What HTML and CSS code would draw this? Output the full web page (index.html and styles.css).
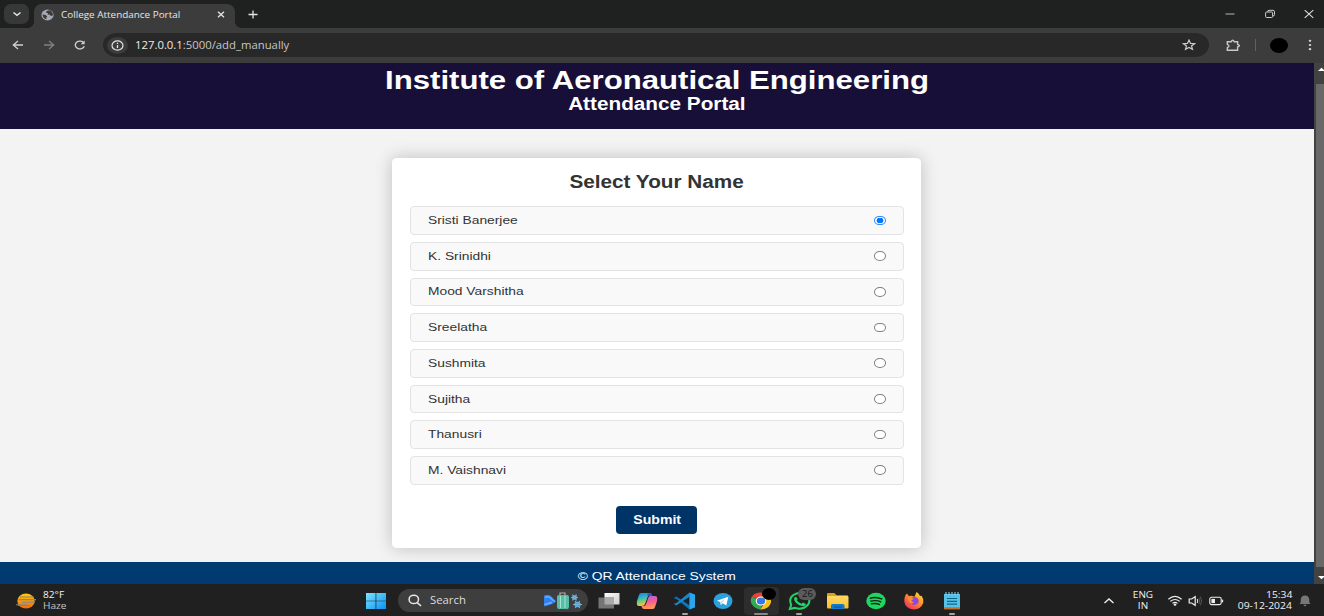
FILE: index.html
```html
<!DOCTYPE html>
<html lang="en">
<head>
<meta charset="utf-8">
<title>College Attendance Portal</title>
<link rel="stylesheet" href="styles.css">
</head>
<body>
<div class="screen">
  <div class="tabstrip">
    <div class="tab-search"><svg width="10" height="8" viewBox="0 0 10 8"><path d="M1.5 2.5 5 5.3 8.5 2.5" fill="none" stroke="#e3e3e3" stroke-width="1.6"/></svg></div>
    <div class="tab">
      <svg class="globe" width="13" height="12" viewBox="0 0 13 12"><ellipse cx="6.5" cy="6" rx="6.1" ry="5.4" fill="#a5a9b1"/><path d="M7 1.6Q5 2 5 3.4L7 4.2 6.5 5.5 9 5.7 10 7.2 12 6.2Q12 2.5 8.5 1.2ZM1.4 5.6 4.6 6 6.3 7.5 5.3 8.4 5.4 10.3Q2 9.6 1.4 5.6Z" fill="#3c3c3c"/></svg>
      <span class="tab-title">College Attendance Portal</span>
      <svg class="tab-close" width="8" height="7" viewBox="0 0 8 7"><path d="M1 .8 7 6.2M7 .8 1 6.2" stroke="#e3e3e3" stroke-width="1.4"/></svg>
    </div>
    <svg class="new-tab" width="10" height="9" viewBox="0 0 10 9"><path d="M.5 4.5H9.5M5 .5V8.5" stroke="#e3e3e3" stroke-width="1.3"/></svg>
    <div class="window-buttons">
      <svg width="10" height="10" viewBox="0 0 10 10"><path d="M.5 5H9.5" stroke="#aaa" stroke-width="1.1"/></svg>
      <svg width="10" height="10" viewBox="0 0 10 10"><rect x=".6" y="3" width="7" height="5.5" rx="1" fill="none" stroke="#ccc"/><path d="M2.5 2.8Q2.5 1.3 4 1.3H8Q9.5 1.3 9.5 2.8V5.5Q9.5 7 8 7" fill="none" stroke="#ccc"/></svg>
      <svg width="10" height="10" viewBox="0 0 10 10"><path d="M.7 1.2 9.3 8.8M9.3 1.2.7 8.8" stroke="#ddd" stroke-width="1.1"/></svg>
    </div>
  </div>
  <div class="toolbar">
    <svg class="nav" width="12" height="10" viewBox="0 0 12 10"><path d="M11 5H1.5M6 1 1.3 5 6 9" fill="none" stroke="#d0d0d0" stroke-width="1.3"/></svg>
    <svg class="nav" width="12" height="10" viewBox="0 0 12 10"><path d="M1 5H10.5M6 1 10.7 5 6 9" fill="none" stroke="#808080" stroke-width="1.3"/></svg>
    <svg class="nav" width="12" height="10" viewBox="0 0 12 10"><path d="M9.8 2.9A4.6 3.9 0 1 0 10.3 6.2" fill="none" stroke="#d0d0d0" stroke-width="1.4"/><path d="M10.6.4V4.2H6.7Z" fill="#d0d0d0"/></svg>
    <div class="omnibox">
      <div class="info"><svg width="13" height="11" viewBox="0 0 13 11"><ellipse cx="6.5" cy="5.5" rx="5.5" ry="4.6" fill="none" stroke="#e3e3e3" stroke-width="1.2"/><path d="M6.5 4.9V8M6.5 2.8V4" stroke="#e3e3e3" stroke-width="1.3"/></svg></div>
      <span class="url">127.0.0.1<span class="url-path">:5000/add_manually</span></span>
      <svg class="star" width="14" height="12" viewBox="0 0 14 12"><path d="M7 1.1 8.5 4.4 12.6 4.7 9.5 7 10.5 10.4 7 8.5 3.5 10.4 4.5 7 1.4 4.7 5.5 4.4Z" fill="none" stroke="#ccc" stroke-width="1.2"/></svg>
    </div>
    <svg class="ext" width="15" height="13" viewBox="0 0 15 13"><path d="M1.3 2.7H5.2Q6.7-.1 8.2 2.7H11.6V5.5Q15.3 6.7 11.6 8V11.2H1.3V8.6Q4.6 7 1.3 5.3Z" fill="none" stroke="#c8c8c8" stroke-width="1.4"/></svg>
    <span class="divider"></span>
    <span class="avatar"></span>
    <svg class="menu-dots" width="4" height="12" viewBox="0 0 4 12"><g fill="#d0d0d0"><ellipse cx="2" cy="1.8" rx="1.3" ry="1.1"/><ellipse cx="2" cy="6" rx="1.3" ry="1.1"/><ellipse cx="2" cy="10.2" rx="1.3" ry="1.1"/></g></svg>
  </div>
  <div class="viewport">
    <div class="page">
      <header class="site-header">
        <h1 class="wide">Institute of Aeronautical Engineering</h1>
        <h2 class="wide">Attendance Portal</h2>
      </header>
      <main class="main">
        <form class="card">
          <h2 class="wide">Select Your Name</h2>
          <div class="names">
            <label class="row"><span class="wide">Sristi Banerjee</span><i class="radio checked"></i></label>
            <label class="row"><span class="wide">K. Srinidhi</span><i class="radio"></i></label>
            <label class="row"><span class="wide">Mood Varshitha</span><i class="radio"></i></label>
            <label class="row"><span class="wide">Sreelatha</span><i class="radio"></i></label>
            <label class="row"><span class="wide">Sushmita</span><i class="radio"></i></label>
            <label class="row"><span class="wide">Sujitha</span><i class="radio"></i></label>
            <label class="row"><span class="wide">Thanusri</span><i class="radio"></i></label>
            <label class="row"><span class="wide">M. Vaishnavi</span><i class="radio"></i></label>
          </div>
          <button class="submit" type="button"><span class="wide">Submit</span></button>
        </form>
      </main>
      <footer class="site-footer"><span class="wide">© QR Attendance System</span></footer>
    </div>
    <div class="scrollbar">
      <svg width="9" height="21" viewBox="0 0 9 21"><path d="M3 8 6.5 4.8 10 8Z" fill="#fff"/></svg>
      <div class="thumb"></div>
      <svg width="9" height="17" viewBox="0 0 9 17"><path d="M3 9 6.5 12.2 10 9Z" fill="#fff"/></svg>
    </div>
  </div>
  <div class="taskbar">
    <div class="weather">
      <svg width="22" height="18" viewBox="0 0 22 18"><defs><linearGradient id="sun" x2="0" y2="1"><stop stop-color="#ffcb0a"/><stop offset="1" stop-color="#f56a0a"/></linearGradient></defs><ellipse cx="11" cy="9" rx="8.7" ry="7.6" fill="url(#sun)"/><path d="M5 5H19M3.5 7.6H14M7 10.2H20M1 12.8H12M10 7.6H21M3 13.5H15" stroke="#8c8376" stroke-width="1.1"/></svg>
      <div class="weather-text"><span class="ui">82°F</span><span class="ui muted">Haze</span></div>
    </div>
    <div class="tasks">
      <svg class="start" width="22" height="18" viewBox="0 0 22 18"><defs><linearGradient id="win" x2="1" y2="1"><stop stop-color="#79e5ff"/><stop offset="1" stop-color="#0a91f3"/></linearGradient></defs><path d="M1 1H10.6V8.7H1ZM11.3 1H21V8.7H11.3ZM1 9.3H10.6V17H1ZM11.3 9.3H21V17H11.3Z" fill="url(#win)"/></svg>
      <div class="search">
        <svg width="14" height="13" viewBox="0 0 14 13"><ellipse cx="5.8" cy="5.4" rx="4.7" ry="4.2" fill="none" stroke="#e6e6e6" stroke-width="1.5"/><path d="M9.2 8.6 13 12" stroke="#e6e6e6" stroke-width="1.6"/></svg>
        <span class="ui">Search</span>
        <svg class="travel" width="40" height="18" viewBox="0 0 40 18"><path d="M1 3.5Q7 1.5 9.5 5.5L13 9.5Q10 12.5 1 14.5Z" fill="#3180ee"/><path d="M2 5.5Q6 3.5 9 7.5L12 9.5M1.5 12.5 9 10.5" fill="none" stroke="#69b2ff" stroke-width="1.4"/><path d="M17 3V1H22V3" fill="none" stroke="#b8aaa5" stroke-width="1.2"/><rect x="14" y="3" width="12" height="14" rx="2" fill="#58bda6"/><path d="M17.5 4V16M22 4V16" stroke="#a4e5d2"/><path d="M16 17V18M24 17V18" stroke="#555"/><g stroke="#6bb1dc" stroke-width="1.2" fill="none"><path d="M28 5.5H35M29.5 2.7 33.5 8.3M33.5 2.7 29.5 8.3M30 12.5H39M32.3 9 36.7 16M36.7 9 32.3 16"/><ellipse cx="31.5" cy="5.5" rx="2" ry="1.6"/><ellipse cx="34.5" cy="12.5" rx="2.6" ry="2.1"/></g></svg>
      </div>
      <div class="app"><svg width="24" height="20" viewBox="0 0 24 20"><defs><linearGradient id="tv" x2="1" y2="1"><stop stop-color="#fff"/><stop offset="1" stop-color="#ccc"/></linearGradient></defs><rect x="7.5" y="2" width="15" height="11.5" fill="url(#tv)"/><rect x="1.5" y="6.5" width="15.5" height="11" fill="#747474"/><path d="M7.5 6.5H17V13.5H7.5Z" fill="#aaa"/></svg></div>
      <div class="app"><svg width="24" height="20" viewBox="0 0 24 20"><defs><linearGradient id="ca" x2=".3" y2="1"><stop stop-color="#1b79ef"/><stop offset=".45" stop-color="#31bfb5"/><stop offset="1" stop-color="#fac82c"/></linearGradient><linearGradient id="cb" x2=".2" y2="1"><stop stop-color="#a668ef"/><stop offset=".5" stop-color="#f45a97"/><stop offset="1" stop-color="#ff984e"/></linearGradient></defs><path d="M6 2H15Q16.5 2 17.3 5H13L10 13Q9.3 15 7 15H4Q1 15 2 10L4 4Q4.6 2 6 2Z" fill="url(#ca)"/><path d="M18 18H9Q7 18 6.5 15H8.5Q10.5 15 11.2 12.5L13.5 6Q14 5 16 5H20Q23 5 22 10L20 16Q19.4 18 18 18Z" fill="url(#cb)"/><path d="M15 2Q16.5 2 17.3 5H13L12 3Z" fill="#2556c8"/></svg></div>
      <div class="app running"><svg width="24" height="20" viewBox="0 0 24 20"><path d="M16.5 1.5 22 3.7V16.3L16.5 18.5 5.2 9.2 2.7 7.5 1.5 8.1V6.4L3.2 5.5 16.5 14.2Z" fill="#0a76be"/><path d="M16.5 1.5 4.8 10.9 2.8 12.4 1.5 11.8V13.3L3.2 14.5 16.5 5.8Z" fill="#1689d0"/><path d="M16.5 1.5 22 3.7V16.3L16.5 18.5Z" fill="#2aa5ee"/></svg></div>
      <div class="app"><svg width="24" height="20" viewBox="0 0 24 20"><ellipse cx="12" cy="10" rx="9.5" ry="8" fill="#2ba0da"/><path d="M5.8 9.8 17.3 5.8 15.3 14.5 11.7 12.3 9.8 13.9 9.2 11Z" fill="#fff"/><path d="M9.2 11 15 7.4 10.6 11.7 9.8 13.9Z" fill="#b8d9ec"/></svg></div>
      <div class="app running active"><svg width="24" height="20" viewBox="0 0 24 20"><path d="M12 10 2.9 5.6Q5.5 1.5 12 1.5 18.5 1.5 21.1 5.6H12Z" fill="#ea4335"/><path d="M2.9 5.6Q-.5 12.2 6 16.5 8.5 18.2 11 18.4L14.5 12Z" fill="#34a853"/><path d="M21.1 5.6H12L15.8 12 11 18.4Q19.3 18.8 21.8 12 22.5 8.6 21.1 5.6Z" fill="#fbc116"/><ellipse cx="12" cy="10" rx="5.3" ry="4.5" fill="#fff"/><ellipse cx="12" cy="10" rx="4.2" ry="3.5" fill="#3478e5"/></svg><span class="profile-dot"></span></div>
      <div class="app running"><svg width="24" height="20" viewBox="0 0 24 20"><path d="M1.8 18 3.2 13.8Q.4 7.4 5.4 4 11.8-.2 18.3 4 23.5 8.6 20 13.8 14.6 19.5 7 16.9Z" fill="#202020" stroke="#24d366" stroke-width="2"/><path d="M8 5.7 9.8 8.1 8.8 9.3Q10.5 11.8 13.5 12.8L15 11.4 18 12.9Q17 15.7 14 15.1 8 13.6 6.2 9 5.8 6.1 8 5.7Z" fill="#24d366"/></svg><span class="badge">26</span></div>
      <div class="app"><svg width="24" height="20" viewBox="0 0 24 20"><defs><linearGradient id="fo" x2="0" y2="1"><stop stop-color="#ffd866"/><stop offset="1" stop-color="#fbbd26"/></linearGradient></defs><path d="M2 2H8.2L10.7 4.2H21Q22 4.2 22 5.2V8H1V3Q1 2 2 2Z" fill="#dda018"/><rect x="1" y="5" width="21.5" height="12.5" rx="1" fill="url(#fo)"/><path d="M5 18V14.5Q5 13 6.5 13H16.5Q18.5 13 18.5 14.5V18Z" fill="#1278ce"/><path d="M8 16H16" stroke="#07549c"/></svg></div>
      <div class="app"><svg width="24" height="20" viewBox="0 0 24 20"><ellipse cx="12" cy="10" rx="9.7" ry="8.3" fill="#1ed760"/><path d="M5.7 7.3Q12.5 5.4 18.3 8.2M6.3 10.2Q12.2 8.7 17.2 11M6.8 12.9Q11.5 11.7 16 13.6" fill="none" stroke="#15251a" stroke-width="1.4"/></svg></div>
      <div class="app"><svg width="24" height="20" viewBox="0 0 24 20"><defs><linearGradient id="fx" x1="1" y1="0" x2=".2" y2="1"><stop stop-color="#fff04b"/><stop offset=".4" stop-color="#ff9d25"/><stop offset="1" stop-color="#f12c60"/></linearGradient></defs><path d="M3.5 4 5 2.5 6.8 5 9.7 4.8 12.5 5.7 14.5 1Q17 2.5 18 5L19.5 4.8Q22 8 21.3 11.8 19 18.4 11.8 18.4 3.2 17.8 2.3 10.5 2.2 6.5 3.5 4Z" fill="url(#fx)"/><ellipse cx="12.3" cy="10" rx="4.4" ry="3.9" fill="#8b49dd"/><path d="M6 6.2Q9 6.4 12 7.8L9.3 9.4Q10 11.6 12.5 10.8 9 14.6 6.5 10Z" fill="#ff8f30"/></svg></div>
      <div class="app running"><svg width="24" height="20" viewBox="0 0 24 20"><path d="M4 3H20V18H4Z" fill="#56c1e6"/><path d="M4 16.3H20V18.4H4Z" fill="#c06d2e"/><path d="M6 1V4M9 1V4M12 1V4M15 1V4M18 1V4" stroke="#96ddf5"/><path d="M7 7.5H17M7 10.3H17M7 13.1H17" stroke="#11658b" stroke-width="1.2"/></svg></div>
    </div>
    <div class="tray">
      <svg class="chev" width="12" height="8" viewBox="0 0 12 8"><path d="M1.5 6 6 2 10.5 6" fill="none" stroke="#eee" stroke-width="1.4"/></svg>
      <div class="lang"><span class="ui">ENG</span><span class="ui">IN</span></div>
      <svg class="wifi" width="16" height="12" viewBox="0 0 16 12"><path d="M1.4 4.3Q8-1.4 14.6 4.3M3.3 6.4Q8 2.6 12.7 6.4M5.5 8.4Q8 6.4 10.5 8.4" fill="none" stroke="#eee" stroke-width="1.2"/><ellipse cx="8" cy="9.7" rx="1.4" ry="1.1" fill="#eee"/></svg>
      <svg class="sound" width="15" height="12" viewBox="0 0 15 12"><path d="M1.2 4H3.6L7.2 1.7V10.3L3.6 8H1.2Z" fill="none" stroke="#eee" stroke-width="1.2"/><path d="M9.2 4Q10.3 6 9.2 8" fill="none" stroke="#eee"/><path d="M10.8 2.8Q12.8 6 10.8 9.2M12.3 1.6Q15 6 12.3 10.4" fill="none" stroke="#555"/></svg>
      <svg class="battery" width="15" height="10" viewBox="0 0 15 10"><rect x=".8" y="1.3" width="11.4" height="7.3" rx="1.8" fill="none" stroke="#eee" stroke-width="1.1"/><path d="M2.4 2.9H6V7.1H2.4Z" fill="#eee"/><path d="M13.5 3.7V6.3" stroke="#eee" stroke-width="1.3"/></svg>
      <div class="clock"><span class="ui">15:34</span><span class="ui">09-12-2024</span></div>
      <svg class="bell" width="12" height="12" viewBox="0 0 12 12"><path d="M.5 9 1.7 7.3V4.6Q2.2.6 6 .6 9.8.6 10.3 4.6V7.3L11.5 9ZM4.3 9.7H7.7Q7 11.3 6 11.3 5 11.3 4.3 9.7Z" fill="#777"/></svg>
    </div>
  </div>
</div>
</body>
</html>
```
FILE: styles.css
```css
* { box-sizing: border-box; }
body { margin: 0; overflow: hidden; }
svg { display: block; flex: none; overflow: hidden; }
h1, h2 { margin: 0; font-weight: 700; }

.screen {
  width: 1324px;
  height: 616px;
  overflow: hidden;
  display: flex;
  flex-direction: column;
  font-family: "Liberation Sans", Arial, sans-serif;
}

.wide { display: block; width: fit-content; margin: 0 auto; transform: scaleX(1.185); white-space: nowrap; }
.ui, .tab-title, .url { display: block; white-space: nowrap; font-family: "Open Sans", "Noto Sans", sans-serif; transform-origin: left center; }

/* Browser tabs */
.tabstrip { height: 28px; background: #1f2120; display: flex; align-items: center; padding-left: 4px; }
.tab-search { width: 25px; height: 20px; border-radius: 7px; background: #383838; display: flex; align-items: center; justify-content: center; }
.tab {
  position: relative;
  width: 201px; height: 24px; margin: 4px 0 0 5px;
  border-radius: 8px 8px 0 0;
  background: #3c3c3c;
  display: flex; align-items: center;
  padding: 0 10px 3px 7px;
}
.tab::before, .tab::after { content: ""; position: absolute; bottom: 0; width: 7px; height: 6px; }
.tab::before { left: -7px; background: radial-gradient(ellipse 7px 6px at 0 0, transparent 98%, #3c3c3c); }
.tab::after { right: -7px; background: radial-gradient(ellipse 7px 6px at 100% 0, transparent 98%, #3c3c3c); }
.tab-title { margin-left: 7px; width: 107px; font-size: 9px; line-height: 14px; color: #e6e6e6; transform: scaleX(1.1); }
.tab-close { margin-left: auto; }
.new-tab { margin-left: 12.5px; }
.window-buttons { margin-left: auto; display: flex; gap: 29.5px; padding-right: 10px; }

/* Browser toolbar */
.toolbar { height: 34.5px; background: #3c3c3c; display: flex; align-items: center; padding: 0 12px; }
.nav { margin-right: 19px; }
.nav:nth-child(3) { margin: 0 17px 0 0; }
.omnibox { width: 1106px; height: 24px; border-radius: 14px / 12px; background: #282828; display: flex; align-items: center; padding: 0 13px 0 4px; }
.info { width: 21px; height: 17px; border-radius: 50%; background: #3c3c3c; display: flex; align-items: center; justify-content: center; }
.url { margin-left: 7px; font-size: 10.4px; line-height: 16px; color: #ececec; transform: scaleX(1.09); }
.url-path { color: #c7c7c7; }
.star { margin-left: auto; }
.ext { margin-left: 17px; }
.divider { width: 1px; height: 12px; background: #606060; margin-left: 14px; }
.avatar { width: 18px; height: 15px; border-radius: 50%; background: #000; margin-left: 14px; }
.menu-dots { margin-left: 20px; }

/* Web page */
.viewport { height: 521.5px; display: flex; }
.page { width: 1314.4px; flex: none; display: flex; flex-direction: column; background: #f3f3f3; }
.site-header { height: 66.5px; background: #180f38; color: #fff; padding: 2.4px 1.2px 0 0; }
.site-header h1 { font-size: 26px; line-height: 30px; transform: scaleX(1.198); }
.site-header h2 { font-size: 17.5px; line-height: 19px; }
.main { flex: 1; padding-top: 29px; }
.card { width: 529px; height: 390px; margin: 0 0 0 392.3px; background: #fff; border-radius: 5px / 4px; box-shadow: 0 0 17px rgba(0, 0, 0, .22); padding: 14px 17.5px 0; }
.card h2 { font-size: 17.5px; line-height: 21px; color: #333; }
.names { display: grid; gap: 7.1px; margin-top: 13.3px; }
.row { height: 28.6px; border: 1px solid #e3e3e3; border-radius: 4px; background: #f9f9f9; display: flex; align-items: center; justify-content: space-between; padding: 0 17px 0 17.5px; color: #333; font-size: 11.8px; }
.row .wide { margin: 0; transform: scaleX(1.17); transform-origin: left center; line-height: 13px; padding-bottom: 0; }
.radio { width: 11.5px; height: 9.6px; border: 1px solid #808080; border-radius: 50%; background: #fff; margin-bottom: .5px; }
.radio.checked { border-color: #2d83f5; background: radial-gradient(ellipse 3.7px 3px at center, #0075ff 90%, #fff); }
.submit { display: block; width: 81px; height: 28px; margin: 20.8px auto 0; padding: 1px 0 0; border: 0; border-radius: 4px; background: #003366; color: #fff; font: 700 11.9px/14px "Liberation Sans", Arial, sans-serif; }
.site-footer { height: 22px; background: #003a70; color: #fff; font-size: 11.7px; line-height: 14px; padding: 7px 1.5px 0 0; }

.scrollbar { width: 9.6px; flex: none; background: #424242; padding-left: .6px; display: flex; flex-direction: column; }
.thumb { flex: 1; margin-left: 1px; background: #686868; }

/* Taskbar */
.taskbar { height: 32px; background: #202020; display: flex; align-items: center; color: #f2f2f2; font-size: 8.8px; line-height: 11.5px; padding-top: 1px; }
.weather { width: 365px; display: flex; align-items: center; padding-left: 15px; gap: 6px; }
.weather .ui { transform: scaleX(1.15); }
.weather-text, .lang, .clock { padding-top: 1px; }
.muted { color: #c4c4c4; }
.tasks { display: flex; align-items: center; height: 32px; }
.search { width: 190px; height: 23px; margin: 0 2px 0 11px; border-radius: 12px; background: #3e3e3e; display: flex; align-items: center; padding: 0 5px 0 10px; }
.search .ui { margin-left: 8px; padding-top: 1px; font-size: 10.4px; color: #dcdcdc; transform: scaleX(1.09); }
.travel { margin-left: auto; }
.app { position: relative; width: 38.1px; height: 32px; display: flex; align-items: center; justify-content: center; }
.active::before { content: ""; position: absolute; inset: 2px 1.5px; background: #2d2d2d; border-radius: 4px; }
.app svg { position: relative; }
.running::after { content: ""; position: absolute; left: 16px; bottom: 2px; width: 6px; height: 2px; border-radius: 1px; background: #a3a3a3; }
.active::after { left: 12px; width: 14px; background: #888; }
.profile-dot { position: absolute; left: 20px; top: 3px; width: 14px; height: 12px; border-radius: 50%; background: #000; }
.badge { position: absolute; left: 18px; top: 3px; width: 18px; height: 12px; border-radius: 6px; background: #5b5b5b; color: #151515; font: 9.5px/12px "Open Sans", sans-serif; text-align: center; }
.tray { margin-left: auto; display: flex; align-items: center; padding-right: 13px; }
.lang { width: 22px; margin-left: 17px; text-align: center; }
.lang .ui, .clock .ui { transform: scaleX(1.13); transform-origin: center; }
.wifi { margin-left: 13px; }
.sound { margin-left: 5px; }
.battery { margin-left: 6px; }
.clock { width: 55px; margin-left: 13px; display: flex; flex-direction: column; align-items: flex-end; }
.clock .ui { transform: scaleX(1.18); transform-origin: right center; }
.bell { margin-left: 7px; }
```
